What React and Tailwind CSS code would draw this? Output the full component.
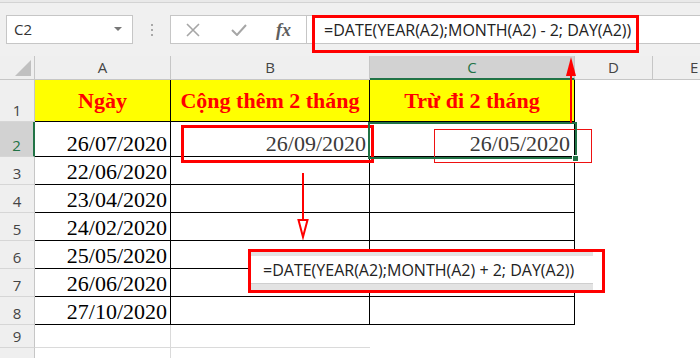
import React from "react";

const ui = { fontFamily: '"Open Sans", "Noto Sans", sans-serif' };
const serif = { fontFamily: '"Liberation Serif", "Times New Roman", serif' };

const dates = [
  "26/07/2020",
  "22/06/2020",
  "23/04/2020",
  "24/02/2020",
  "25/05/2020",
  "26/06/2020",
  "27/10/2020",
];

function RowHead({ n, selected, h }) {
  return (
    <div
      className={`w-[35px] shrink-0 flex items-end justify-center pb-[1px] text-[15px] leading-[20px] border-b border-[#d6d6d6] ${
        selected
          ? "bg-[#d2d2d2] text-[#217346] border-r-2 border-r-[#217346]"
          : "bg-[#efefef] text-[#444] border-r border-r-[#c6c6c6]"
      } ${h}`}
      style={ui}
    >
      {n}
    </div>
  );
}

export default function App() {
  return (
    <div className="relative w-[700px] h-[358px] overflow-hidden bg-white">
      {/* toolbar */}
      <div className="h-[3px] bg-[#e9e9e9] border-b border-[#d3d3d3]" />
      <div className="h-[53px] bg-[#f0f0f0] flex items-start pt-[12px]" style={ui}>
        <div className="ml-[6px] w-[127px] h-[29px] bg-white border border-[#c6c6c6] flex items-center justify-between pl-[7px] pr-[10px] text-[15px] text-[#333]">
          <span>C2</span>
          <svg width="8" height="5" viewBox="0 0 8 5">
            <polygon points="0,0 8,0 4,4" fill="#777" />
          </svg>
        </div>
        <div className="w-[37px] h-[29px] flex flex-col items-center justify-center gap-[3px]">
          <span className="w-[2px] h-[2px] bg-[#a8a8a8]" />
          <span className="w-[2px] h-[2px] bg-[#a8a8a8]" />
          <span className="w-[2px] h-[2px] bg-[#a8a8a8]" />
        </div>
        <div className="w-[137px] h-[29px] bg-white border border-[#c6c6c6] flex items-center">
          <svg className="ml-[15px]" width="14" height="14" viewBox="0 0 14 14">
            <path d="M1 1 L13 13 M13 1 L1 13" stroke="#a6a6a6" strokeWidth="1.6" fill="none" />
          </svg>
          <svg className="ml-[31px]" width="16" height="12" viewBox="0 0 16 12">
            <path d="M1 6 L6 11 L15 1" stroke="#a6a6a6" strokeWidth="2" fill="none" />
          </svg>
          <span
            className="ml-[29px] text-[18px] italic font-bold text-[#5e5e5e] leading-none"
            style={serif}
          >
            fx
          </span>
        </div>
        <div className="flex-1 h-[29px] bg-white border-y border-[#c6c6c6] flex items-center pl-[17px] text-[16px] text-[#222]">
          =DATE(YEAR(A2);MONTH(A2) - 2; DAY(A2))
        </div>
      </div>

      {/* column headers */}
      <div className="flex h-[24px] text-[15px] text-[#444]" style={ui}>
        <div className="w-[35px] bg-[#efefef] border-r border-b border-[#c6c6c6] flex items-end justify-end pr-[3px] pb-[3px]">
          <svg width="16" height="16" viewBox="0 0 16 16">
            <polygon points="0,16 16,16 16,0" fill="#c0c0c0" />
          </svg>
        </div>
        <div className="w-[136px] bg-[#efefef] border-r border-b border-[#c6c6c6] flex items-center justify-center">A</div>
        <div className="w-[199px] bg-[#efefef] border-r border-b border-[#c6c6c6] flex items-center justify-center">B</div>
        <div className="w-[205px] bg-[#d2d2d2] border-r border-r-[#c6c6c6] border-b-2 border-b-[#217346] text-[#217346] flex items-center justify-center">C</div>
        <div className="w-[78px] bg-[#efefef] border-r border-b border-[#c6c6c6] flex items-center justify-center">D</div>
        <div className="flex-1 bg-[#efefef] border-b border-[#c6c6c6] flex items-center pl-[37px]">E</div>
      </div>

      {/* row 1 */}
      <div className="flex h-[42px]">
        <RowHead n={1} h="h-[42px]" />
        <div className="w-[136px] bg-[#ffff00] border-r border-b border-black flex items-center justify-center text-[22px] font-bold text-[#ff0000]" style={serif}>
          Ngày
        </div>
        <div className="w-[199px] bg-[#ffff00] border-r border-b border-black flex items-center justify-center text-[22px] font-bold text-[#ff0000]" style={serif}>
          Cộng thêm 2 tháng
        </div>
        <div className="w-[205px] bg-[#ffff00] border-r border-b border-black flex items-center justify-center text-[22px] font-bold text-[#ff0000]" style={serif}>
          Trừ đi 2 tháng
        </div>
      </div>

      {/* rows 2-8 */}
      {dates.map((d, i) => {
        const h = i === 0 ? "h-[35px]" : "h-[28px]";
        return (
          <div key={d} className={`flex ${h}`} style={serif}>
            <RowHead n={i + 2} selected={i === 0} h={h} />
            <div className="w-[136px] border-r border-b border-black flex items-end justify-end pr-[3px] text-[22px] leading-[24px] text-black">
              {d}
            </div>
            <div className="w-[199px] border-r border-b border-black flex items-end justify-end pr-[3px] text-[22px] leading-[24px] text-[#3a3a3a]">
              {i === 0 ? "26/09/2020" : ""}
            </div>
            <div className="w-[205px] border-r border-b border-black flex items-end justify-end pr-[4px] text-[22px] leading-[24px] text-[#3a3a3a]">
              {i === 0 ? "26/05/2020" : ""}
            </div>
          </div>
        );
      })}

      {/* rows 9-10 */}
      {[9, 10].map((n) => (
        <div key={n} className={`flex ${n === 9 ? "h-[23px]" : "h-[28px]"}`}>
          <RowHead n={n} h={n === 9 ? "h-[23px]" : "h-[28px]"} />
          <div className="w-[136px] border-r border-b border-[#dadada]" />
          <div className="w-[199px] border-b border-[#dadada]" />
        </div>
      ))}

      {/* overlays */}
      <div className="absolute left-[312px] top-[15px] w-[327px] h-[38px] border-[3px] border-[#ff0000]" />
      <div className="absolute left-[181px] top-[125px] w-[193px] h-[38px] border-[3px] border-[#ff0000]" />
      <div className="absolute left-[434px] top-[129px] w-[158px] h-[34px] border border-[#ee1111]" />
      <div className="absolute left-[368px] top-[122px] w-[209px] h-[37px] border-2 border-[#217346]" />
      <div className="absolute left-[572px] top-[155px] w-[7px] h-[7px] bg-[#217346] border border-white" />

      <svg className="absolute left-[565px] top-[56px]" width="12" height="68" viewBox="0 0 12 68">
        <line x1="6" y1="18" x2="6" y2="67" stroke="#ff0000" strokeWidth="2" />
        <polygon points="1,20 6,1 11,20" fill="#ff0000" />
      </svg>
      <svg className="absolute left-[296px] top-[172px]" width="14" height="68" viewBox="0 0 14 68">
        <line x1="7" y1="1" x2="7" y2="48" stroke="#ff0000" strokeWidth="2" />
        <polygon points="2.5,48 11.5,48 7,65" fill="#fff" stroke="#ff0000" strokeWidth="2" />
      </svg>

      <div className="absolute left-[248px] top-[249px] w-[357px] h-[44px] border-[3px] border-[#ff0000] bg-white" style={ui}>
        <div className="w-[342px] h-full flex flex-col">
          <div className="h-[4px] bg-[#e3e3e3]" />
          <div className="h-[27px] flex items-center pl-[12px] text-[16px] text-[#222]">
            =DATE(YEAR(A2);MONTH(A2) + 2; DAY(A2))
          </div>
          <div className="flex-1 bg-[#e3e3e3] border-t border-[#cfcfcf]" />
        </div>
      </div>
    </div>
  );
}
